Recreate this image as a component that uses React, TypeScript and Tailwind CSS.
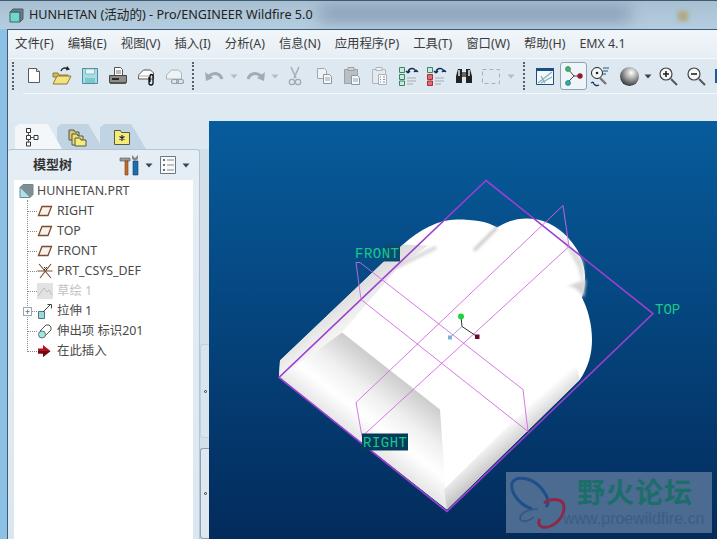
import { FC, ReactNode } from 'react';

const FONT = "font-['Noto_Sans','Noto_Sans_CJK_SC',sans-serif]";

const MENUS = ['文件(F)', '编辑(E)', '视图(V)', '插入(I)', '分析(A)', '信息(N)', '应用程序(P)', '工具(T)', '窗口(W)', '帮助(H)', 'EMX 4.1'];

const Icon: FC<{ children: ReactNode; className?: string; size?: number }> = ({ children, className = 'w-7', size = 24 }) => (
  <div className={`flex h-full shrink-0 items-center justify-center ${className}`}>
    <svg width={size} height={size} viewBox={`0 0 ${size} ${size}`}>
      {children}
    </svg>
  </div>
);

const Caret: FC<{ className?: string; color?: string }> = ({ className = '', color = '#b4bcc4' }) => (
  <div className={`flex h-full w-[10px] shrink-0 items-center justify-center ${className}`}>
    <svg width="8" height="5" viewBox="0 0 8 5">
      <path d="M0.5 0.5h7L4 4.5z" fill={color} />
    </svg>
  </div>
);

const Dots: FC<{ className?: string }> = ({ className = '' }) => (
  <div className={`my-[2px] h-[28px] w-px shrink-0 border-l-2 border-dotted border-[#55626e] ${className}`} />
);

const Toolbar = () => (
  <div className="flex h-[34px] items-center overflow-hidden pl-1">
    <Dots />
    <div className="flex h-full shrink-0 ml-[6px]">
      <Icon>
        <path d="M6.5 4.5h8l3 3v11h-11z" fill="#fff" stroke="#5b5b5b" />
        <path d="M14.5 4.5v3h3" fill="#ddd" stroke="#5b5b5b" />
      </Icon>
      <Icon>
        <path d="M3 9h5l1 2h9v2H3z" fill="#d9b84f" stroke="#8a7a3a" />
        <path d="M3 20l4-8h14l-4 8z" fill="#f5e27e" stroke="#8a7a3a" />
        <path d="M11 7c1-3 4-4 7-2" fill="none" stroke="#222" strokeWidth="1.4" />
        <path d="M17 2l3 3.500-4 1z" fill="#222" />
      </Icon>
      <Icon>
        <path d="M4.500 4.500h15v15h-15z" fill="#a6dde0" stroke="#4f8aa6" />
        <path d="M7.500 5h9v5h-9z" fill="#e6f4f6" stroke="#6fa6ba" strokeWidth="0.7" />
        <path d="M7 14h10v5H7z" fill="#7cc6cc" />
      </Icon>
      <Icon>
        <path d="M8.500 3.500h6l2 2v6h-8z" fill="#fff" stroke="#555" />
        <path d="M10 7h5M10 9h5" stroke="#777" />
        <path d="M3.500 11.500h17v7h-17z" fill="#8d8d88" stroke="#444" />
        <path d="M6 14h7v2H6z" fill="#2a2a2a" />
        <path d="M4 18h16v2H4z" fill="#55554f" />
      </Icon>
      <Icon>
        <path d="M4.500 11l5-5h7l3 3v6h-15z" fill="#fff" stroke="#555" />
        <path d="M4 12h15" stroke="#aaa" />
        <path d="M15 13v6a2 2 0 0 0 4 0v-7a1.500 1.500 0 0 0-3 0v6" fill="none" stroke="#111" strokeWidth="1.300" />
      </Icon>
      <Icon>
        <path d="M4.500 11l5-5h7l3 3v6h-15z" fill="#eef3f6" stroke="#aab4ba" />
        <rect x="9.500" y="15.500" width="7" height="4" rx="2" fill="none" stroke="#98a4ab" strokeWidth="1.200" />
        <rect x="14.500" y="15.500" width="7" height="4" rx="2" fill="none" stroke="#98a4ab" strokeWidth="1.200" />
      </Icon>
    </div>
    <Dots className="ml-1" />
    <Icon className="ml-[9px] w-[22px]" size={22}>
      <path d="M6 11c5-4 11-3 13 3" fill="none" stroke="#a3abb1" strokeWidth="3" />
      <path d="M2 7l1 9 7-3z" fill="#a3abb1" />
    </Icon>
    <Caret className="ml-1" />
    <Icon className="ml-[6px] w-[22px]" size={22}>
      <path d="M16 11c-5-4-11-3-13 3" fill="none" stroke="#a3abb1" strokeWidth="3" />
      <path d="M20 7l-1 9-7-3z" fill="#a3abb1" />
    </Icon>
    <Caret className="ml-[3px]" />
    <Icon className="ml-px w-7">
      <path d="M8 3l5 11M16 3l-5 11" stroke="#a9b1b7" strokeWidth="1.600" />
      <circle cx="9" cy="18" r="2.700" fill="none" stroke="#a3abb1" strokeWidth="1.300" />
      <circle cx="15" cy="18" r="2.700" fill="none" stroke="#a3abb1" strokeWidth="1.300" />
    </Icon>
    <Icon className="ml-px w-7">
      <path d="M5.500 4.500h7l2 2v8h-9z" fill="#eef3f6" stroke="#a0a8ae" />
      <path d="M11.500 10.500h6l2 2v7h-8z" fill="#f5f8fa" stroke="#8e979e" />
      <path d="M13 14h5M13 16h5" stroke="#9aa2a8" />
    </Icon>
    <Icon>
      <path d="M4.500 5.500h13v14h-13z" fill="#b9bfc3" stroke="#9aa2a8" />
      <path d="M8 3.500h6v3H8z" fill="#cfd4d8" stroke="#9aa2a8" />
      <path d="M11.500 11.500h6l2 2v7h-8z" fill="#f5f8fa" stroke="#8e979e" />
      <path d="M13 15h5M13 17h5" stroke="#9aa2a8" />
    </Icon>
    <Icon>
      <path d="M4.500 5.500h13v14h-13z" fill="#e4eaee" stroke="#b0b8be" />
      <path d="M8 3.500h6v3H8z" fill="#eef2f5" stroke="#b0b8be" />
      <path d="M10.500 10.500h8v10h-8z" fill="#f7fafb" stroke="#aab2b8" />
      <path d="M12 13h1M15 13h2M12 15.500h1M15 15.500h2M12 18h1M15 18h2" stroke="#8a9298" />
    </Icon>
    <Icon>
      <path d="M3.500 3.500h5v5h-5zM3.500 10.500h5v5h-5zM3.500 17h5v4.500h-5z" fill="#cfe8dc" stroke="#2f8a68" />
      <path d="M12 9a4 4 0 0 1 8-1M12 9l-2-2M12 9l2-2M20 6l-2 2M20 6l2 2" fill="none" stroke="#14305a" strokeWidth="1.400" />
      <path d="M11 14h9M11 17h9M11 20h6" stroke="#a5adb3" />
    </Icon>
    <Icon>
      <path d="M3.500 3.500h5v5h-5z" fill="#cfe8dc" stroke="#2f8a68" />
      <path d="M3.500 10.500h5v5h-5zM3.500 17h5v4.500h-5z" fill="#d8707a" stroke="#b02a3a" />
      <path d="M12 9a4 4 0 0 1 8-1M12 9l-2-2M12 9l2-2M20 6l-2 2M20 6l2 2" fill="none" stroke="#14305a" strokeWidth="1.400" />
      <path d="M11 14h9M11 17h9M11 20h6" stroke="#a5adb3" />
    </Icon>
    <Icon>
      <path d="M4 12l2-7h4v14H4z" fill="#222" />
      <path d="M20 12l-2-7h-4v14h6z" fill="#222" />
      <path d="M10 8h4v5h-4z" fill="#666" />
      <path d="M6 6h2v6H6zM16 6h2v6h-2z" fill="#b9b9b0" />
    </Icon>
    <Icon className="w-[26px]">
      <path d="M3.500 5.500h17v14h-17z" fill="none" stroke="#a9b1b7" strokeDasharray="4 3" />
    </Icon>
    <Caret className="ml-[2px]" />
    <Dots className="ml-[7px]" />
    <Icon className="ml-[6px] w-7">
      <path d="M3.500 5.500h17v15h-17z" fill="#f4f8fa" stroke="#1a4f86" />
      <path d="M3 4h18v3H3z" fill="#174f88" />
      <path d="M5 19l14-11M8 19l11-6M8 12l4 7" stroke="#7fb0b8" strokeWidth="1.200" />
    </Icon>
    <div className="ml-px flex h-[28px] w-[27px] shrink-0 items-center justify-center rounded-[3px] border border-[#8ea4b6] bg-[#eef4f8]">
      <svg width="22" height="24" viewBox="0 0 22 24">
        <path d="M5 5l6 7-6 6M11 12h6" fill="none" stroke="#444" />
        <circle cx="5" cy="5" r="2.500" fill="#3fb56e" stroke="#1d7a44" strokeWidth="0.600" />
        <circle cx="5" cy="19" r="2.500" fill="#35a8a0" stroke="#1d7a72" strokeWidth="0.600" />
        <circle cx="17" cy="12" r="2.700" fill="#8c1c2e" />
      </svg>
    </div>
    <Icon className="w-[26px]">
      <circle cx="9" cy="9" r="5.500" fill="#f4f8fa" stroke="#222" />
      <circle cx="9" cy="9" r="1.300" fill="#222" />
      <path d="M15 4h6M15 7h5M15 10h3" stroke="#1a5a78" />
      <path d="M12 14l6 6" stroke="#777" strokeWidth="2.400" />
      <path d="M5 18a4 4 0 0 0 6 3M5 18l-2 1M5 18l1 2" fill="none" stroke="#14305a" strokeWidth="1.200" />
    </Icon>
    <div className="ml-[2px] flex h-full w-7 shrink-0 items-center justify-center">
      <div className="h-[19px] w-[19px] rounded-full bg-[radial-gradient(circle_at_60%_30%,#ffffff_0%,#9c9c9c_40%,#222222_85%)]" />
    </div>
    <Caret color="#3a4650" />
    <Icon className="ml-px w-7">
      <circle cx="10" cy="10" r="6" fill="#f4f8fa" stroke="#444" strokeWidth="1.200" />
      <path d="M7 10h6M10 7v6" stroke="#222" strokeWidth="1.600" />
      <path d="M15 15l6 6" stroke="#555" strokeWidth="2" />
    </Icon>
    <Icon>
      <circle cx="10" cy="10" r="6" fill="#f4f8fa" stroke="#444" strokeWidth="1.200" />
      <path d="M7 10h6" stroke="#222" strokeWidth="1.600" />
      <path d="M15 15l6 6" stroke="#555" strokeWidth="2" />
    </Icon>
    <div className="ml-[5px] h-[14px] w-[4px] shrink-0 bg-[#1d5c9c]" />
  </div>
);

const Tabs = () => (
  <div className="flex h-[28px] items-end pl-[7px]">
    <div className="relative z-10 flex h-[25px] w-[47px] items-center pl-[9px] bg-[#f3f7fa] [clip-path:polygon(0_100%,0_12%,10%_0,70%_0,100%_100%)]">
      <svg width="20" height="20" viewBox="0 0 20 20">
        <path d="M2.500 1.500h4v4h-4zM2.500 8.500h4v4h-4zM2.500 15h4v4h-4zM10 8.500h4v4h-4z" fill="#fff" stroke="#333" />
        <path d="M4.500 5.500v3M4.500 12.500v3M6.500 10.500h3.500" stroke="#555" />
      </svg>
    </div>
    <div className="-ml-[5px] flex h-[25px] w-[46px] items-center pl-[11px] bg-[#c0d4e4] [clip-path:polygon(0_100%,0_12%,10%_0,68%_0,100%_100%)]">
      <svg width="20" height="20" viewBox="0 0 20 20">
        <path d="M1 3h5l1 2h4v8H1z" fill="#d8c860" stroke="#555" />
        <path d="M4 7h5l1 2h5v9H4z" fill="#ece070" stroke="#555" />
        <path d="M7 11h5l1 2h5v6H7z" fill="#f6ec78" stroke="#555" />
      </svg>
    </div>
    <div className="-ml-[3px] flex h-[25px] w-[46px] items-center pl-[12px] bg-[#c0d4e4] [clip-path:polygon(0_100%,0_12%,10%_0,68%_0,100%_100%)]">
      <svg width="20" height="18" viewBox="0 0 20 18">
        <path d="M2.500 2.500h6l1 2h8v12h-15z" fill="#f4ec78" stroke="#5a5a40" />
        <path d="M10 7v6M7.500 8.500l5 3M12.500 8.500l-5 3" stroke="#161650" strokeWidth="1.100" />
      </svg>
    </div>
  </div>
);

const PlaneIcon = () => (
  <svg width="16" height="14" viewBox="0 0 16 14">
    <path d="M5 2.500h9.500L11 11.500H1.500z" fill="#f7f3ea" stroke="#7a4a30" strokeWidth="1.300" />
  </svg>
);

const Row: FC<{ icon: ReactNode; label: string; muted?: boolean; expand?: boolean }> = ({ icon, label, muted, expand }) => (
  <div className="relative flex h-5 items-center pl-[13px]">
    <div className="w-[10px] shrink-0 border-t border-dotted border-[#8a8a8a]" />
    <div className="flex w-[20px] shrink-0 items-center justify-start">{icon}</div>
    <span className={muted ? 'text-[#c2c2c2]' : 'text-[#4a4a4a]'}>{label}</span>
    {expand && (
      <div className="absolute left-[9px] top-[6px] flex h-[9px] w-[9px] items-center justify-center border border-[#9aa8b4] bg-white text-[9px] leading-none text-[#445]">
        +
      </div>
    )}
  </div>
);

const Tree = () => (
  <div className="relative min-h-0 flex-1 bg-white pt-[1px] text-[12.4px] leading-5">
    <div className="absolute left-[13px] top-[20px] h-[150px] border-l border-dotted border-[#8a8a8a]" />
    <div className="flex h-5 items-center gap-[3px] pl-[5px] text-[#4a4a4a]">
      <svg width="15" height="14" viewBox="0 0 15 14">
        <path d="M1 3.500h10v10H1z" fill="#a8e4ea" stroke="#6a8a90" />
        <path d="M1 3.500l3-3h10v10l-3 3" fill="#808e94" stroke="#6a8a90" />
      </svg>
      <span>HUNHETAN.PRT</span>
    </div>
    <Row icon={<PlaneIcon />} label="RIGHT" />
    <Row icon={<PlaneIcon />} label="TOP" />
    <Row icon={<PlaneIcon />} label="FRONT" />
    <Row
      label="PRT_CSYS_DEF"
      icon={
        <svg width="17" height="16" viewBox="0 0 17 16">
          <path d="M2 1l12 14M14 1L3 15M0.500 8h15" stroke="#7a4a30" strokeWidth="1.100" />
          <path d="M7 4l3 3M10 4l-3 3" stroke="#333" />
        </svg>
      }
    />
    <Row
      muted
      label="草绘 1"
      icon={
        <svg width="16" height="16" viewBox="0 0 16 16">
          <path d="M0 0h16v16H0z" fill="#e2e2e2" />
          <path d="M1 13l6-8 3 4 2-2 3 5" fill="none" stroke="#bcbcbc" />
        </svg>
      }
    />
    <Row
      expand
      label="拉伸 1"
      icon={
        <svg width="16" height="16" viewBox="0 0 16 16">
          <path d="M1.500 8.500h6v7h-6z" fill="#9adadf" stroke="#4a7a80" />
          <path d="M6 9l7-7M10.500 1.500h4v4" fill="none" stroke="#444" />
        </svg>
      }
    />
    <Row
      label="伸出项 标识201"
      icon={
        <svg width="16" height="16" viewBox="0 0 16 16">
          <path d="M3 8l6-6h3l2 2v3l-6 6" fill="#fff" stroke="#555" />
          <circle cx="5" cy="11.500" r="3.500" fill="#a8e4dc" stroke="#4a7a80" />
        </svg>
      }
    />
    <Row
      label="在此插入"
      icon={
        <svg width="15" height="14" viewBox="0 0 15 14">
          <path d="M1 4.500h5V1l7.500 6L6 13V9.500H1z" fill="#b3121e" />
          <path d="M1 7h12.500L6 13V9.500H1z" fill="#6e0a12" />
        </svg>
      }
    />
  </div>
);

const Sidebar = () => (
  <aside className="flex h-full w-[201px] shrink-0 flex-col bg-[#dde8f1]">
    <Tabs />
    <div className="flex min-h-0 flex-1">
      <div className="flex w-[192px] shrink-0 flex-col rounded-t-[3px] border-t border-r border-[#b4c6d4] bg-[linear-gradient(#e6eef5,#dbe7f0)] pl-[6px] pr-[6px]">
        <div className="flex h-[30px] shrink-0 items-center">
          <span className="ml-[19px] text-[13px] font-bold text-[#333]">模型树</span>
          <svg className="ml-[47px]" width="22" height="24" viewBox="0 0 22 24">
            <path d="M1 5h10v3H1z" fill="#9a9a9a" stroke="#555" strokeWidth="0.600" />
            <path d="M6 8h3v14H6z" fill="#c26a28" stroke="#7a3a10" strokeWidth="0.600" />
            <path d="M14 8h5v14h-5z" fill="#1b6fb0" stroke="#123f66" strokeWidth="0.600" />
            <path d="M13 2l3 3 3-3v4l-3 2-3-2z" fill="#8a8a8a" />
          </svg>
          <svg className="ml-1" width="8" height="5" viewBox="0 0 8 5">
            <path d="M0.500 0.500h7L4 4.500z" fill="#3a4650" />
          </svg>
          <svg className="ml-[6px]" width="18" height="20" viewBox="0 0 18 20">
            <path d="M1.500 1.500h15v17h-15z" fill="#f8fafb" stroke="#6a7680" />
            <path d="M4 5h2M4 10h2M4 15h2" stroke="#444" strokeWidth="1.600" />
            <path d="M8 5h7M8 10h7M8 15h7" stroke="#888" />
          </svg>
          <svg className="ml-[5px]" width="8" height="5" viewBox="0 0 8 5">
            <path d="M0.500 0.500h7L4 4.500z" fill="#3a4650" />
          </svg>
        </div>
        <Tree />
      </div>
      <div className="flex w-[9px] shrink-0 flex-col justify-end gap-[10px] bg-[#d3e0ea]">
        <div className="flex h-[94px] items-center justify-center rounded-l-[3px] border border-r-0 border-[#c2d0dc] bg-[#d8e4ee]">
          <div className="h-[3px] w-[3px] rounded-full border border-[#334]" />
        </div>
        <div className="flex h-[91px] items-center justify-center rounded-l-[3px] border border-r-0 border-[#8ea0b0] bg-[#dfe8f0]">
          <div className="h-[3px] w-[3px] rounded-full border border-[#334]" />
        </div>
      </div>
    </div>
  </aside>
);

const Model = () => (
  <svg className="block h-full w-full" viewBox="209 122 508 417">
    <defs>
      <linearGradient id="wall" gradientUnits="userSpaceOnUse" x1="391" y1="371" x2="345" y2="430">
        <stop offset="0" stopColor="#cccccc" />
        <stop offset="0.4" stopColor="#f0f0f0" />
        <stop offset="0.7" stopColor="#ffffff" />
        <stop offset="1" stopColor="#e6e6e6" />
      </linearGradient>
      <linearGradient id="bevel" gradientUnits="userSpaceOnUse" x1="505" y1="425" x2="522" y2="445">
        <stop offset="0" stopColor="#ffffff" />
        <stop offset="1" stopColor="#c4c4c4" />
      </linearGradient>
      <linearGradient id="back" gradientUnits="userSpaceOnUse" x1="340" y1="335" x2="322" y2="312">
        <stop offset="0" stopColor="#f6f6f6" />
        <stop offset="1" stopColor="#dcdcdc" />
      </linearGradient>
      <filter id="soft">
        <feGaussianBlur stdDeviation="1.500" />
      </filter>
    </defs>
    <path
      d="M279 378L280 361L383 263L403 245C420 230 438 220 457 220C474 220 488 222 497 228C506 222 516 219 527 219C548 219 566 232 577 250C582 260 585 268 585 277C585 285 584 292 582 298C588 310 592 325 592 340C592 355 588 368 580 380L447 510z"
      fill="#ffffff"
    />
    <path d="M279 378L280 361L383 263L403 245L428 246L398 268L342 333z" fill="url(#back)" />
    <path d="M279 378L342 333L440 410L447 510z" fill="url(#wall)" />
    <path d="M447 510L444 490L550 385L572 352L580 380z" fill="url(#bevel)" />
    <path d="M474 251L497 228" stroke="#c4c4c4" strokeWidth="3" filter="url(#soft)" />
    <path d="M395 268L436 248" stroke="#d8d8d8" strokeWidth="4" filter="url(#soft)" />
    <path d="M563 288C572 284 578 290 584 298L586 280z" fill="#d4d4d4" filter="url(#soft)" />
    <path d="M556 228L583 262L584 290L578 268z" fill="#dcdcdc" filter="url(#soft)" />

    <path d="M486 181L653 314L447 512L279 378z" fill="none" stroke="#9a40d0" strokeWidth="1.600" />
    <path d="M356 263L361 300L528 432L523 390L360 263L356 263z" fill="none" stroke="#d268e4" strokeWidth="0.900" />
    <path d="M563 206L569 247L362 437L356 403L563 206z" fill="none" stroke="#d268e4" strokeWidth="0.900" />

    <path d="M462 327L461 317" stroke="#333" />
    <path d="M462 327L477 337" stroke="#333" />
    <path d="M462 327L450 338" stroke="#8ab4cc" />
    <circle cx="461" cy="317" r="3" fill="#22d040" />
    <rect x="448" y="336" width="4" height="4" fill="#7ab4d8" />
    <rect x="475" y="335" width="4.500" height="4.500" fill="#6a0a2a" />

    <rect x="383" y="245" width="17" height="17" fill="#0a4a70" />
    <rect x="362" y="434" width="46" height="17" fill="#063a5c" />
    <g fontFamily="'Liberation Mono', monospace" fontSize="14" fill="#18c888">
      <text x="355" y="258" letterSpacing="0.500">FRONT</text>
      <text x="363" y="447" letterSpacing="0.500">RIGHT</text>
      <text x="655" y="314">TOP</text>
    </g>
  </svg>
);

const Watermark = () => (
  <div className="absolute bottom-[6px] right-[5px] flex h-[61px] w-[206px] bg-[#4b6b90]">
    <svg className="ml-[2px] mt-[3px] shrink-0" width="58" height="56" viewBox="0 0 58 56">
      <path d="M24 34C12 30 2 18 4 8C8 0 24 2 34 14C40 22 42 28 38 32" fill="none" stroke="#1f4f8a" strokeWidth="3" />
      <path d="M36 28C44 22 56 24 56 32C56 44 44 54 34 52C30 50 30 46 32 44" fill="none" stroke="#8a2a4a" strokeWidth="3" />
      <path d="M30 34C20 34 12 38 12 44C14 48 22 46 26 42" fill="none" stroke="#34557e" strokeWidth="1.500" />
    </svg>
    <div className="ml-[5px] flex min-w-0 flex-1 flex-col">
      <span className="ml-[6px] mt-[2px] whitespace-nowrap text-[28px] font-bold leading-[36px] tracking-[1px] text-[#1c6e6a]">野火论坛</span>
      <span className="-ml-[8px] whitespace-nowrap font-['Liberation_Sans',sans-serif] text-[16px] leading-[18px] text-[#3d5c86]">www.proewildfire.cn</span>
    </div>
  </div>
);

export default function App() {
  return (
    <div className={`relative h-[539px] w-[717px] overflow-hidden bg-[#8cc0e4] ${FONT}`}>
      <div className="relative flex h-[29px] items-center overflow-hidden border-t border-[#3c5a70] bg-[linear-gradient(#a8c0d2,#b4cde0)] pl-[9px]">
        <div className="absolute left-[320px] top-[6px] h-[14px] w-[310px] bg-[#8498b0] blur-sm" />
        <div className="absolute left-[678px] top-[10px] h-[10px] w-[10px] bg-[#b0a880] blur-[2px]" />
        <svg className="relative" width="15" height="15" viewBox="0 0 15 15">
          <path d="M1 4h10v10H1z" fill="#70d8c8" stroke="#44606a" />
          <path d="M1 4l3-3h10v10l-3 3V4z" fill="#6a7a88" stroke="#44606a" />
        </svg>
        <span className="relative ml-[5px] text-[12.6px] text-[#222]">HUNHETAN (活动的) - Pro/ENGINEER Wildfire 5.0</span>
      </div>
      <div className="ml-[7px] flex h-[510px] flex-col border-t border-l border-[#3e5b74] bg-[#dde8f1]">
        <div className="flex h-[28px] items-center gap-[14px] bg-[linear-gradient(#f1f6fa,#e6eef5)] pl-[7px] text-[12.4px] text-[#3c3c3c]">
          {MENUS.map((menu) => (
            <span key={menu} className="whitespace-nowrap">
              {menu}
            </span>
          ))}
        </div>
        <div className="border-t border-[#f4f8fb] bg-[#dde8f1]">
          <Toolbar />
        </div>
        <div className="ml-[15px] h-px bg-[#f2f7fa]" />
        <div className="h-[27px] bg-[#dfe9f2]" />
        <div className="flex min-h-0 flex-1">
          <Sidebar />
          <main className="relative min-w-0 flex-1 bg-[linear-gradient(#075c9c,#032b5c)]">
            <Model />
            <Watermark />
          </main>
        </div>
      </div>
    </div>
  );
}
